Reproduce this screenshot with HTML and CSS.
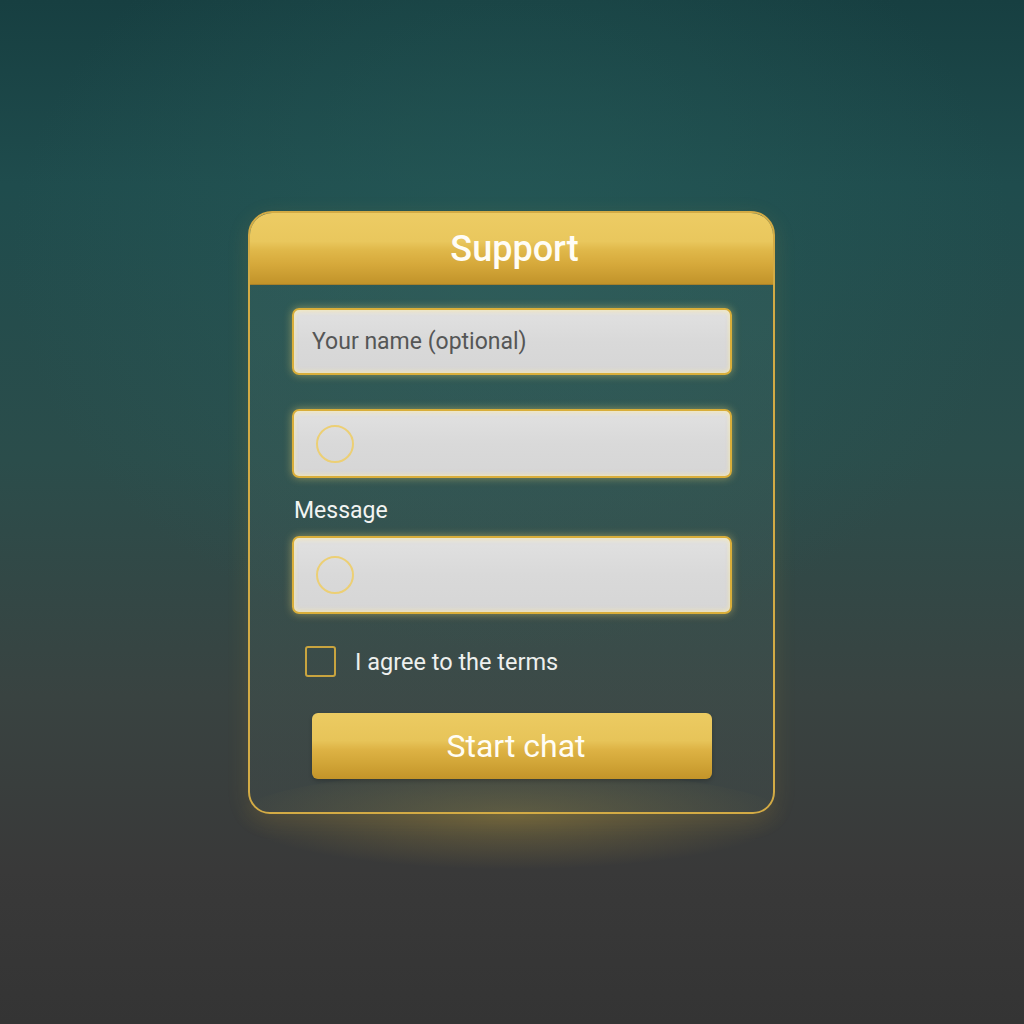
FILE: index.html
```html
<!DOCTYPE html>
<html>
<head>
<meta charset="utf-8">
<link rel="stylesheet" href="styles.css">
</head>
<body>
<div class="stage">
  <div class="glow"></div>
  <div class="card">
    <div class="card-header">
      <h1 class="title">Support</h1>
    </div>
    <div class="card-body">
      <div class="field field-name">
        <span class="placeholder">Your name (optional)</span>
      </div>
      <div class="field field-icon">
        <span class="ring"></span>
      </div>
      <div class="label">Message</div>
      <div class="field field-message">
        <span class="ring"></span>
      </div>
      <label class="agree">
        <span class="checkbox"></span>
        <span class="agree-text">I agree to the terms</span>
      </label>
      <button class="start">Start chat</button>
    </div>
  </div>
</div>
</body>
</html>
```

FILE: styles.css
```css
html, body {
  margin: 0;
  padding: 0;
  width: 1024px;
  height: 1024px;
  overflow: hidden;
}
body {
  font-family: Roboto, "Noto Sans", Arial, sans-serif;
  background:
    radial-gradient(ellipse 70% 55% at 50% 25%, rgba(40, 95, 92, 0.55), rgba(40, 95, 92, 0) 70%),
    linear-gradient(180deg, #173f41 0%, #1f4c4d 18%, #2b4d4b 45%, #394341 68%, #393939 85%, #343434 100%);
}
.stage {
  position: relative;
  width: 1024px;
  height: 1024px;
  display: flex;
  align-items: flex-start;
  justify-content: center;
}
.glow {
  position: absolute;
  left: 232px;
  top: 770px;
  width: 560px;
  height: 100px;
  border-radius: 50%;
  background: radial-gradient(ellipse at 50% 45%, rgba(215, 175, 60, 0.3), rgba(215, 175, 60, 0) 70%);
}
.card {
  position: relative;
  margin-top: 211px;
  margin-left: -1px;
  width: 527px;
  height: 603px;
  box-sizing: border-box;
  border: 2px solid #d3ab45;
  border-radius: 24px 24px 22px 22px;
  background: linear-gradient(180deg, rgba(60, 105, 100, 0.35), rgba(70, 85, 82, 0.3));
  box-shadow: 0 6px 22px rgba(210, 170, 60, 0.14);
  overflow: hidden;
  display: flex;
  flex-direction: column;
}
.card-header {
  height: 71px;
  flex: none;
  display: flex;
  align-items: center;
  justify-content: center;
  background: linear-gradient(180deg, #edcc64 0%, #e9c75d 40%, #e0b84a 52%, #d6a93b 72%, #c1932a 100%);
  border-bottom: 1px solid #a7802a;
}
.title {
  margin: 0;
  font-family: Roboto, "Noto Sans", Arial, sans-serif;
  font-size: 36px;
  font-weight: 500;
  color: #fffdf6;
  padding-top: 1px;
  padding-left: 6px;
}
.card-body {
  padding: 23px 41px 0 42px;
  display: flex;
  flex-direction: column;
}
.field {
  box-sizing: border-box;
  border: 2px solid #d9ae3a;
  border-radius: 7px;
  background: linear-gradient(180deg, #e1e1e1 0%, #d9d9d9 50%, #d6d6d6 100%);
  box-shadow: 0 0 8px rgba(255, 225, 110, 0.45), inset 0 2px 4px rgba(255, 240, 170, 0.5), inset 0 -2px 4px rgba(255, 240, 170, 0.5);
  display: flex;
  align-items: center;
}
.field-name {
  height: 67px;
  padding-left: 18px;
}
.field-icon {
  height: 69px;
  margin-top: 34px;
  padding-left: 22px;
}
.field-message {
  height: 78px;
  padding-left: 22px;
}
.placeholder {
  font-size: 23px;
  color: #555656;
}
.ring {
  width: 38px;
  height: 38px;
  box-sizing: border-box;
  border: 2px solid #eccf74;
  border-radius: 50%;
}
.label {
  margin-top: 20px;
  margin-bottom: 12px;
  margin-left: 2px;
  font-size: 23px;
  line-height: 26px;
  color: #f2f4f2;
}
.agree {
  margin-top: 32px;
  margin-left: 13px;
  display: flex;
  align-items: center;
  gap: 19px;
}
.checkbox {
  width: 31px;
  height: 31px;
  box-sizing: border-box;
  border: 2px solid #c9a43f;
  border-radius: 3px;
}
.agree-text {
  font-size: 23.5px;
  color: #eef0ee;
}
.start {
  margin: 36px 20px 0 20px;
  height: 66px;
  border: none;
  border-radius: 6px;
  background: linear-gradient(180deg, #eccb62 0%, #e7c459 42%, #ddb244 56%, #d2a638 75%, #c39429 100%);
  font-family: Roboto, "Noto Sans", Arial, sans-serif;
  font-size: 32px;
  font-weight: 400;
  color: #fffdf5;
  padding-top: 1px;
  padding-left: 14px;
  box-shadow: 0 2px 4px rgba(0, 0, 0, 0.2);
}
```
